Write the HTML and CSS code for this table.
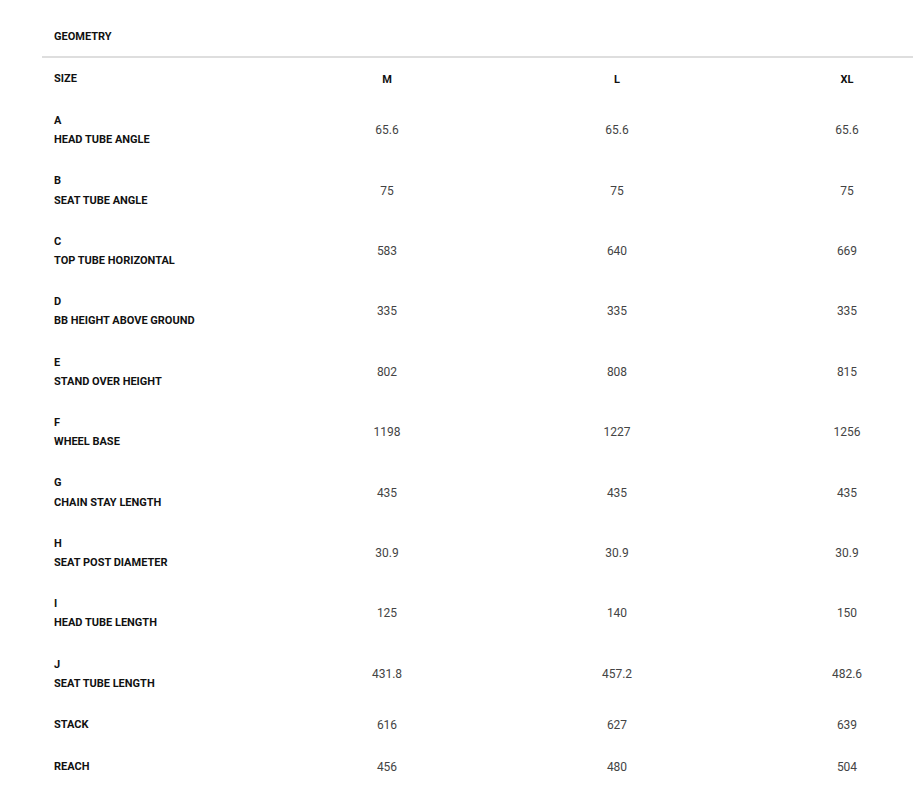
FILE: index.html
```html
<!DOCTYPE html>
<html>
<head>
<meta charset="utf-8">
<link rel="stylesheet" href="styles.css">
</head>
<body>
<div class="geo">
  <div class="title">GEOMETRY</div>
  <div class="table">
    <div class="row single head">
      <div class="label">SIZE</div><div class="val b">M</div><div class="val b">L</div><div class="val b">XL</div>
    </div>
    <div class="row"><div class="label">A<br>HEAD TUBE ANGLE</div><div class="val">65.6</div><div class="val">65.6</div><div class="val">65.6</div></div>
    <div class="row"><div class="label">B<br>SEAT TUBE ANGLE</div><div class="val">75</div><div class="val">75</div><div class="val">75</div></div>
    <div class="row"><div class="label">C<br>TOP TUBE HORIZONTAL</div><div class="val">583</div><div class="val">640</div><div class="val">669</div></div>
    <div class="row"><div class="label">D<br>BB HEIGHT ABOVE GROUND</div><div class="val">335</div><div class="val">335</div><div class="val">335</div></div>
    <div class="row"><div class="label">E<br>STAND OVER HEIGHT</div><div class="val">802</div><div class="val">808</div><div class="val">815</div></div>
    <div class="row"><div class="label">F<br>WHEEL BASE</div><div class="val">1198</div><div class="val">1227</div><div class="val">1256</div></div>
    <div class="row"><div class="label">G<br>CHAIN STAY LENGTH</div><div class="val">435</div><div class="val">435</div><div class="val">435</div></div>
    <div class="row"><div class="label">H<br>SEAT POST DIAMETER</div><div class="val">30.9</div><div class="val">30.9</div><div class="val">30.9</div></div>
    <div class="row"><div class="label">I<br>HEAD TUBE LENGTH</div><div class="val">125</div><div class="val">140</div><div class="val">150</div></div>
    <div class="row"><div class="label">J<br>SEAT TUBE LENGTH</div><div class="val">431.8</div><div class="val">457.2</div><div class="val">482.6</div></div>
    <div class="row single"><div class="label">STACK</div><div class="val">616</div><div class="val">627</div><div class="val">639</div></div>
    <div class="row single"><div class="label">REACH</div><div class="val">456</div><div class="val">480</div><div class="val">504</div></div>
  </div>
</div>
</body>
</html>
```
FILE: styles.css
```css
html, body { overflow: hidden; }
body {
  margin: 0;
  background: #fff;
  font-family: Roboto, "Liberation Sans", sans-serif;
  color: #111;
}
.geo {
  margin-left: 42px;
  width: 871px;
  overflow: hidden;
}
.title {
  font-size: 11px;
  font-weight: 700;
  padding: 29px 12px 0;
  line-height: 16px;
  box-sizing: border-box;
  height: 58px;
  border-bottom: 2px solid #dedede;
}
.table {
  width: 920px;
}
.row {
  display: grid;
  grid-template-columns: repeat(4, 230px);
  align-items: center;
  padding: 11px 0;
}
.label {
  padding-left: 12px;
  font-size: 11px;
  font-weight: 700;
  line-height: 19.2px;
  color: #111;
}
.single .label { line-height: 20px; }
.val {
  text-align: center;
  font-size: 12px;
  color: #444;
}
.val.b {
  font-weight: 700;
  font-size: 11px;
  color: #111;
}
```
